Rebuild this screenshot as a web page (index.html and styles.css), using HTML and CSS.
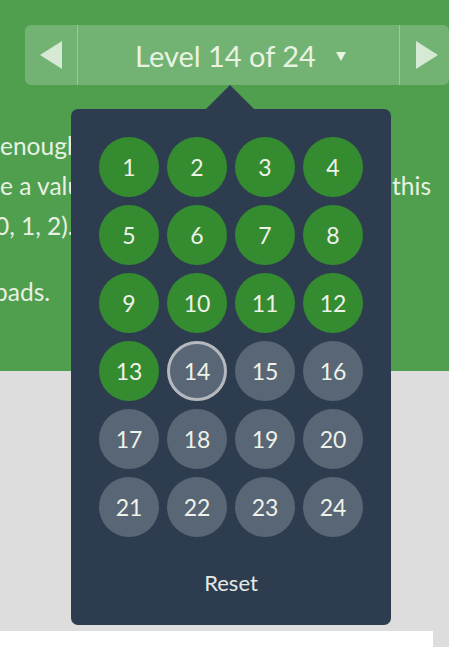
FILE: index.html
```html
<!DOCTYPE html>
<html>
<head>
<meta charset="utf-8">
<link rel="stylesheet" href="styles.css">
</head>
<body>
<div class="page">
  <header class="header">
    <nav class="level-nav">
      <button class="nav-btn nav-prev" aria-label="Previous"><span class="tri tri-left"></span></button>
      <div class="nav-title"><span>Level 14 of 24</span><span class="caret"></span></div>
      <button class="nav-btn nav-next" aria-label="Next"><span class="tri tri-right"></span></button>
    </nav>
    <div class="instructions">
      <p class="para">
        <span class="line l1">enough</span>
        <span class="line l2"><span>e a value</span><span>this</span></span>
        <span class="line l3">0, 1, 2).</span>
      </p>
      <p class="para">
        <span class="line l4">pads.</span>
      </p>
    </div>
    <div class="level-menu">
      <div class="levels">
        <span class="lvl done">1</span><span class="lvl done">2</span><span class="lvl done">3</span><span class="lvl done">4</span>
        <span class="lvl done">5</span><span class="lvl done">6</span><span class="lvl done">7</span><span class="lvl done">8</span>
        <span class="lvl done">9</span><span class="lvl done">10</span><span class="lvl done">11</span><span class="lvl done">12</span>
        <span class="lvl done">13</span><span class="lvl current">14</span><span class="lvl">15</span><span class="lvl">16</span>
        <span class="lvl">17</span><span class="lvl">18</span><span class="lvl">19</span><span class="lvl">20</span>
        <span class="lvl">21</span><span class="lvl">22</span><span class="lvl">23</span><span class="lvl">24</span>
      </div>
      <div class="reset">Reset</div>
    </div>
  </header>
  <section class="below">
    <div class="card"></div>
  </section>
</div>
</body>
</html>
```
FILE: styles.css
```css
html, body {
  margin: 0;
  padding: 0;
}
body {
  background: #dddddd;
  font-family: Lato, "Open Sans", sans-serif;
  color: #e8f1e2;
  overflow: hidden;
}
.page {
  width: 449px;
  height: 647px;
  overflow: hidden;
}
.header {
  position: relative;
  background: #4f9f4f;
  height: 371px;
  padding-top: 25px;
  box-sizing: border-box;
}
.level-nav {
  margin-left: 25px;
  width: 424px;
  height: 60px;
  display: flex;
  background: rgba(255, 255, 255, 0.2);
  border-radius: 6px;
}
.nav-btn {
  background: none;
  border: 0;
  padding: 0;
  display: flex;
  align-items: center;
  justify-content: center;
}
.nav-prev {
  width: 53px;
  border-right: 1px solid rgba(255, 255, 255, 0.3);
}
.nav-next {
  flex: 1;
  border-left: 1px solid rgba(255, 255, 255, 0.3);
}
.tri {
  width: 0;
  height: 0;
  border-top: 14px solid transparent;
  border-bottom: 14px solid transparent;
}
.tri-left {
  border-right: 22px solid #d6e9d4;
}
.tri-right {
  border-left: 22px solid #d6e9d4;
  margin-left: 4px;
}
.nav-title {
  width: 321px;
  display: flex;
  align-items: center;
  justify-content: center;
  font-size: 29px;
  color: #e8f3e2;
  gap: 20px;
  padding-left: 4px;
  box-sizing: border-box;
}
.caret {
  width: 0;
  height: 0;
  border-left: 5.5px solid transparent;
  border-right: 5.5px solid transparent;
  border-top: 9px solid #e8f3e2;
  margin-top: 2px;
}
.instructions {
  margin-top: 41px;
  font-size: 24.5px;
  line-height: 40px;
}
.para {
  margin: 0 0 26px;
}
.line {
  display: block;
  white-space: nowrap;
}
.l2 {
  display: flex;
  justify-content: space-between;
  width: 431px;
}
.l3 {
  margin-left: -5px;
}
.l4 {
  margin-left: -6px;
}
.level-menu {
  position: absolute;
  left: 71px;
  top: 109px;
  width: 320px;
  box-sizing: border-box;
  padding: 28px 28px 26px;
  background: #2d3d4f;
  border-radius: 7px;
}
.level-menu::before {
  content: "";
  position: absolute;
  left: 135px;
  top: -24px;
  border-left: 24px solid transparent;
  border-right: 24px solid transparent;
  border-bottom: 24px solid #2d3d4f;
}
.levels {
  display: grid;
  grid-template-columns: repeat(4, 60px);
  grid-auto-rows: 60px;
  gap: 8px;
}
.lvl {
  border-radius: 50%;
  background: #596676;
  display: flex;
  align-items: center;
  justify-content: center;
  font-size: 23px;
  color: #eef2e8;
  box-sizing: border-box;
}
.lvl.done {
  background: #358b2f;
}
.lvl.current {
  border: 3px solid #b5b9be;
}
.reset {
  margin-top: 30px;
  line-height: 32px;
  text-align: center;
  font-size: 22px;
  color: #e4e9e6;
}
.below {
  height: 276px;
  padding-top: 260px;
  box-sizing: border-box;
}
.card {
  width: 433px;
  height: 16px;
  background: #ffffff;
}
```
